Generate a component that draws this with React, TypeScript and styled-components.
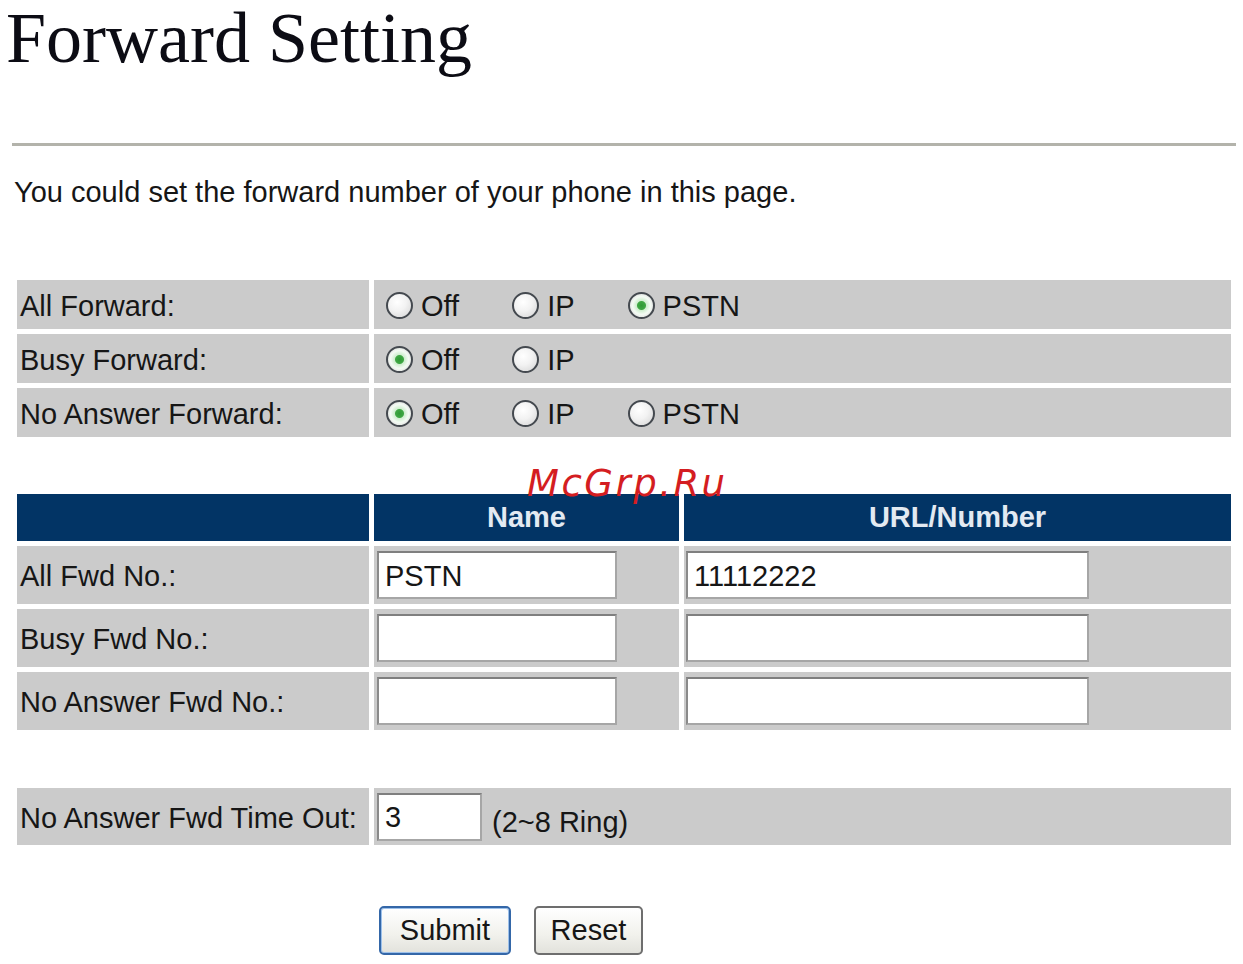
import React from "react";
import styled, { createGlobalStyle } from "styled-components";

const GlobalStyle = createGlobalStyle`
  html, body {
    margin: 0;
    padding: 0;
    background: #ffffff;
  }
  body {
    font-family: "Liberation Sans", Arial, sans-serif;
    color: #161616;
  }
`;

const Page = styled.div`
  position: relative;
  width: 1243px;
  min-height: 964px;
  padding-bottom: 8px;
`;

const Title = styled.h1`
  margin: 0 0 0 6px;
  font-family: "Liberation Serif", "Times New Roman", serif;
  font-weight: normal;
  font-size: 72px;
  line-height: 76px;
  color: #0c0c14;
`;

const Rule = styled.div`
  margin: 67px 0 0 12px;
  width: 1224px;
  height: 3px;
  background: #b3b3ab;
`;

const Intro = styled.p`
  margin: 29px 0 0 14px;
  font-size: 29px;
  line-height: 34px;
`;

const Grid = styled.div<{ $cols: string; $top: number }>`
  display: grid;
  grid-template-columns: ${p => p.$cols};
  column-gap: 5px;
  row-gap: 5px;
  margin: ${p => p.$top}px 0 0 17px;
  width: 1214px;
`;

const Cell = styled.div<{ $h: number }>`
  display: flex;
  align-items: center;
  height: ${p => p.$h}px;
  background: #cbcbcb;
  font-size: 29px;
  line-height: 34px;
`;

const LabelCell = styled(Cell)`
  padding: 2px 0 0 3px;
  box-sizing: border-box;
`;

const ValueCell = styled(Cell)<{ $pad?: number }>`
  padding-left: ${p => p.$pad ?? 3}px;
  box-sizing: border-box;
`;

const RadioCell = styled(Cell)`
  padding: 2px 0 0 12px;
  box-sizing: border-box;
`;

const HeadCell = styled.div`
  display: flex;
  align-items: center;
  justify-content: center;
  height: 47px;
  background: #023465;
  color: #e3eaf2;
  font-weight: bold;
  font-size: 29px;
`;

const Option = styled.label`
  display: inline-flex;
  align-items: center;
  margin-right: 53px;
  cursor: default;
`;

const Radio = styled.input.attrs({ type: "radio" })`
  appearance: none;
  -webkit-appearance: none;
  box-sizing: border-box;
  width: 27px;
  height: 27px;
  margin: 0 8px 0 0;
  border-radius: 50%;
  border: 2px solid #44494f;
  background: radial-gradient(circle at 40% 35%, #ffffff 0%, #f2f2f2 45%, #d2d2d2 100%);

  &:checked {
    background: radial-gradient(
      circle,
      #2f9a35 0,
      #3fa744 4px,
      #cfeecf 5px,
      #f4fbf4 9px,
      #dedede 13px
    );
  }
`;

const TextInput = styled.input<{ $w: number }>`
  box-sizing: border-box;
  width: ${p => p.$w}px;
  height: 48px;
  margin: 0;
  padding: 2px 6px 0;
  border: 2px solid #a6a6a6;
  border-top-color: #7f7f7f;
  border-left-color: #8a8a8a;
  background: #ffffff;
  font-family: "Liberation Sans", Arial, sans-serif;
  font-size: 29px;
  color: #161616;
  outline: none;
`;

const Hint = styled.span`
  margin: 10px 0 0 10px;
`;

const Buttons = styled.div`
  display: flex;
  gap: 23px;
  margin: 61px 0 0 379px;
`;

const Button = styled.button<{ $primary?: boolean; $w: number }>`
  box-sizing: border-box;
  width: ${p => p.$w}px;
  height: 49px;
  padding: 0;
  border-radius: 5px;
  border: 2px solid ${p => (p.$primary ? "#3467a8" : "#6e6e6e")};
  box-shadow: ${p => (p.$primary ? "inset 0 0 0 1px #9cc0ea" : "none")};
  background: linear-gradient(#ffffff, #f1f1ec 60%, #e2e2dc);
  font-family: "Liberation Sans", Arial, sans-serif;
  font-size: 29px;
  color: #161616;
`;

const Watermark = styled.div`
  position: absolute;
  left: 527px;
  top: 462px;
  font-family: "DejaVu Sans", sans-serif;
  font-style: italic;
  font-size: 37px;
  letter-spacing: 2.5px;
  line-height: 44px;
  color: #d41d21;
  pointer-events: none;
`;

type Choice = { label: string; checked?: boolean };

const modeRows: { label: string; name: string; options: Choice[] }[] = [
  {
    label: "All Forward:",
    name: "all",
    options: [{ label: "Off" }, { label: "IP" }, { label: "PSTN", checked: true }],
  },
  {
    label: "Busy Forward:",
    name: "busy",
    options: [{ label: "Off", checked: true }, { label: "IP" }],
  },
  {
    label: "No Answer Forward:",
    name: "noans",
    options: [{ label: "Off", checked: true }, { label: "IP" }, { label: "PSTN" }],
  },
];

const numberRows = [
  { label: "All Fwd No.:", name: "PSTN", url: "11112222" },
  { label: "Busy Fwd No.:", name: "", url: "" },
  { label: "No Answer Fwd No.:", name: "", url: "" },
];

export default function App() {
  return (
    <Page>
      <GlobalStyle />
      <Title>Forward Setting</Title>
      <Rule />
      <Intro>You could set the forward number of your phone in this page.</Intro>

      <Grid $cols="352px 1fr" $top={71}>
        {modeRows.map(row => (
          <React.Fragment key={row.name}>
            <LabelCell $h={49}>{row.label}</LabelCell>
            <RadioCell $h={49}>
              {row.options.map(opt => (
                <Option key={opt.label}>
                  <Radio name={row.name} defaultChecked={opt.checked} />
                  {opt.label}
                </Option>
              ))}
            </RadioCell>
          </React.Fragment>
        ))}
      </Grid>

      <Grid $cols="352px 305px 1fr" $top={57}>
        <HeadCell />
        <HeadCell>Name</HeadCell>
        <HeadCell>URL/Number</HeadCell>
        {numberRows.map(row => (
          <React.Fragment key={row.label}>
            <LabelCell $h={58}>{row.label}</LabelCell>
            <ValueCell $h={58}>
              <TextInput $w={240} defaultValue={row.name} />
            </ValueCell>
            <ValueCell $h={58} $pad={2}>
              <TextInput $w={403} defaultValue={row.url} />
            </ValueCell>
          </React.Fragment>
        ))}
      </Grid>

      <Grid $cols="352px 1fr" $top={58}>
        <LabelCell $h={57}>No Answer Fwd Time Out:</LabelCell>
        <ValueCell $h={57}>
          <TextInput $w={105} defaultValue="3" />
          <Hint>(2~8 Ring)</Hint>
        </ValueCell>
      </Grid>

      <Buttons>
        <Button $primary $w={132}>Submit</Button>
        <Button $w={109}>Reset</Button>
      </Buttons>

      <Watermark>McGrp.Ru</Watermark>
    </Page>
  );
}
